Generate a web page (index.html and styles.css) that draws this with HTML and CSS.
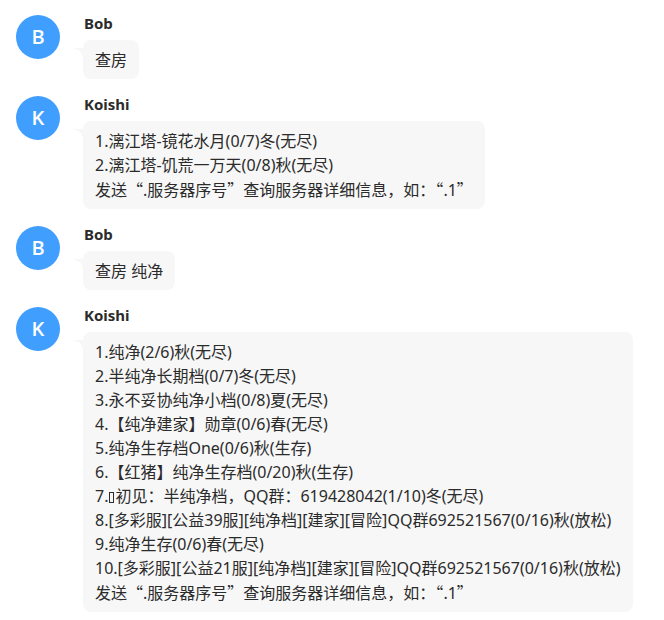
FILE: index.html
```html
<!DOCTYPE html>
<html lang="zh-CN">
<head>
    <meta charset="UTF-8">
    <meta name="viewport" content="width=device-width, initial-scale=1.0">
    <title>Chat</title>
    <link rel="stylesheet" href="styles.css">
</head>
<body>
    <div class="chat">
        <div class="message">
            <div class="avatar">B</div>
            <div class="content">
                <div class="name">Bob</div>
                <div class="bubble">查房</div>
            </div>
        </div>

        <div class="message">
            <div class="avatar">K</div>
            <div class="content">
                <div class="name">Koishi</div>
                <div class="bubble">
                    <p>1.漓江塔-镜花水月(0/7)冬(无尽)</p>
                    <p>2.漓江塔-饥荒一万天(0/8)秋(无尽)</p>
                    <p>发送<span class="q">“</span>.服务器序号<span class="q">”</span>查询服务器详细信息，如：<span class="q">“</span>.1<span class="q">”</span></p>
                </div>
            </div>
        </div>

        <div class="message">
            <div class="avatar">B</div>
            <div class="content">
                <div class="name">Bob</div>
                <div class="bubble">查房 纯净</div>
            </div>
        </div>

        <div class="message">
            <div class="avatar">K</div>
            <div class="content">
                <div class="name">Koishi</div>
                <div class="bubble">
                    <p>1.纯净(2/6)秋(无尽)</p>
                    <p>2.半纯净长期档(0/7)冬(无尽)</p>
                    <p>3.永不妥协纯净小档(0/8)夏(无尽)</p>
                    <p>4.【纯净建家】勋章(0/6)春(无尽)</p>
                    <p>5.纯净生存档One(0/6)秋(生存)</p>
                    <p>6.【红猪】纯净生存档(0/20)秋(生存)</p>
                    <p>7.<span class="tofu"></span>初见：半纯净档，QQ群：619428042(1/10)冬(无尽)</p>
                    <p>8.[多彩服][公益39服][纯净档][建家][冒险]QQ群692521567(0/16)秋(放松)</p>
                    <p>9.纯净生存(0/6)春(无尽)</p>
                    <p>10.[多彩服][公益21服][纯净档][建家][冒险]QQ群692521567(0/16)秋(放松)</p>
                    <p>发送<span class="q">“</span>.服务器序号<span class="q">”</span>查询服务器详细信息，如：<span class="q">“</span>.1<span class="q">”</span></p>
                </div>
            </div>
        </div>
    </div>
</body>
</html>
```

FILE: styles.css
```css
* {
    margin: 0;
    padding: 0;
    box-sizing: border-box;
}

body {
    font-family: "Noto Sans", "Noto Sans CJK SC", sans-serif;
    background: #ffffff;
    color: #2b2b2b;
}

.chat {
    padding: 15px 16px;
    display: flex;
    flex-direction: column;
    gap: 17px;
}

.message {
    display: flex;
    align-items: flex-start;
}

.avatar {
    width: 44px;
    height: 44px;
    border-radius: 50%;
    background: #409eff;
    color: white;
    font-family: "Open Sans", sans-serif;
    font-size: 20px;
    font-weight: 600;
    line-height: 44px;
    text-align: center;
    flex-shrink: 0;
}

.content {
    margin-left: 23px;
    display: flex;
    flex-direction: column;
    align-items: flex-start;
}

.name {
    font-size: 15px;
    font-weight: 700;
    line-height: 16px;
    margin-bottom: 9px;
    margin-left: 1px;
}

.bubble {
    position: relative;
    background: #f7f7f7;
    border-radius: 8px;
    padding: 8px 12px 7px;
    font-size: 16px;
    line-height: 24px;
    white-space: nowrap;
}

.bubble::before {
    content: "";
    position: absolute;
    left: -12px;
    top: 8px;
    width: 12px;
    height: 10px;
    background: radial-gradient(ellipse 12px 10px at 0 100%, transparent 96%, #f7f7f7 100%);
}

/* curly quotes are full width in the original */
.q {
    font-family: "Noto Sans CJK SC", sans-serif;
}

.tofu {
    display: inline-block;
    width: 5px;
    height: 11px;
    border: 1px solid #2b2b2b;
    margin: 0 1px;
    vertical-align: -1px;
}
```
